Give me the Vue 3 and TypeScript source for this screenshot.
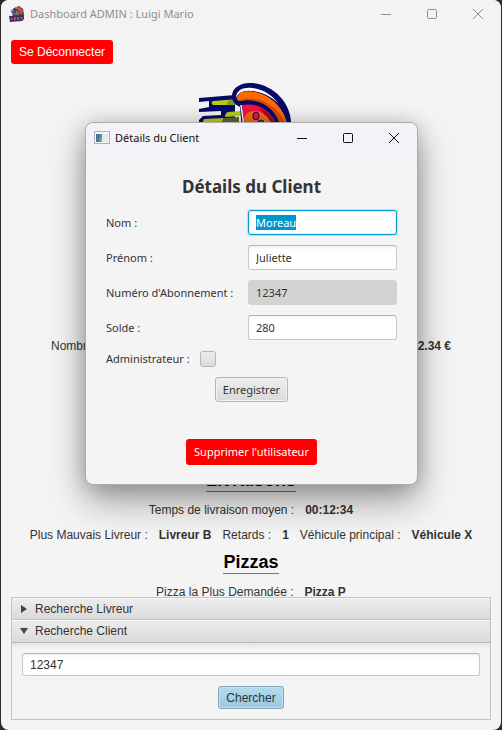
<script setup lang="ts">
import { onMounted, ref } from 'vue'

interface Field {
  id: string
  label: string
  value: string
  locked?: boolean
}

const fields = ref<Field[]>([
  { id: 'nom', label: 'Nom :', value: 'Moreau' },
  { id: 'prenom', label: 'Prénom :', value: 'Juliette' },
  { id: 'abonnement', label: "Numéro d'Abonnement :", value: '12347', locked: true },
  { id: 'solde', label: 'Solde :', value: '280' },
])
const admin = ref(false)
const query = ref('12347')
const form = ref<HTMLFormElement | null>(null)

onMounted(() => {
  const first = form.value?.querySelector<HTMLInputElement>('input')
  first?.focus()
  first?.select()
})
</script>

<template>
  <div class="desktop">
    <div class="window">
      <header class="titlebar">
        <svg class="app-icon" viewBox="0 0 16 16" aria-hidden="true">
          <path d="M2 5l3-3 5-2 4 3 1 5-2 3-9-1z" fill="#3a3c66" />
          <path d="M7 1q6-1 7 6l-2 1Q11 3 6 3z" fill="#e0542c" />
          <path d="M7 4l4 4-5 2z" fill="#4f8f78" />
          <path d="M9 4l3 4-3 1z" fill="#d33a45" />
          <path d="M2 4h3v2H2zM3 7h3v1H3z" fill="#7f8f4a" />
          <path d="M0 10l15-1v4l-2 2-12 1z" fill="#32346c" />
          <path d="M2 12h2v2H2zM5 11h2v3H5zM8 11h2v3H8zM11 11h3v1l-2 2z" fill="#d9413e" />
        </svg>
        <span class="caption">Dashboard ADMIN : Luigi Mario</span>
        <div class="controls">
          <button type="button" aria-label="Réduire"><svg viewBox="0 0 10 10"><path d="M0 5.5h10" /></svg></button>
          <button type="button" aria-label="Agrandir"><svg viewBox="0 0 10 10"><rect x=".5" y=".5" width="9" height="9" rx="1" /></svg></button>
          <button type="button" aria-label="Fermer"><svg viewBox="0 0 10 10"><path d="M0 0l10 10M10 0L0 10" /></svg></button>
        </div>
      </header>

      <div class="toolbar">
        <button type="button" class="danger">Se Déconnecter</button>
      </div>

      <main class="stats">
        <svg class="logo" viewBox="0 0 104 100" aria-hidden="true">
          <path d="M0 15l36-3v30H0v-5l4-4 18-1v-4L0 29v-3l10-2v-6L0 19z" fill="#050a6b" />
          <path d="M14 18l26-2-2 6H14q-3-2 0-4z" fill="#b9cc12" />
          <path d="M30 17l10-1v6H27z" fill="#8b9a10" />
          <path d="M29 29l13-1v5l-16 1q0-4 3-5z" fill="#b9cc12" />
          <path d="M5 36l20-1-3 6H3z" fill="#b9cc12" />
          <path d="M25 35l15-1v7H22z" fill="#5d6a24" />
          <path d="M33 15C32 5 41 0 51 0c23 0 43 21 41 44L46 84 41 24q-7-3-8-9z" fill="#050a6b" />
          <path d="M37 15C37 6 46 4 53 5c11 1 20 7 26 15-9-8-18-12-27-12-8-1-13 2-15 7z" fill="#fff" />
          <path d="M38 15c1-8 12-8 22-5 16 5 28 20 28 34h-6C77 24 60 13 41 18q-3 0-3-3z" fill="#ff6a00" />
          <path d="M40 17c20-6 38 6 47 23v4h-5C77 25 60 14 41 18z" fill="#d94a08" />
          <path d="M43 22c17-3 31 7 35 22L50 78z" fill="#f5123c" />
          <path d="M59 24q15 6 19 20h-8q-2-13-11-20z" fill="#a8062c" />
          <path d="M45 35q3-8 13-7 12 3 15 16L50 76z" fill="#f36a16" />
          <path d="M42 22l3 22" stroke="#fff" stroke-width="1.500" />
          <ellipse cx="57" cy="33" rx="3" ry="4" fill="#f5123c" stroke="#050a6b" />
          <ellipse cx="62" cy="40" rx="3" ry="3" fill="#f5123c" stroke="#050a6b" />
        </svg>

        <p class="row spread"><span>Nombre</span><b>12.34 €</b></p>

        <h2>Livraisons</h2>
        <p class="row"><span>Temps de livraison moyen :</span><b>00:12:34</b></p>
        <p class="row">
          <span>Plus Mauvais Livreur :</span><b>Livreur B</b>
          <span>Retards :</span><b>1</b>
          <span>Véhicule principal :</span><b>Véhicule X</b>
        </p>

        <h2>Pizzas</h2>
        <p class="row"><span>Pizza la Plus Demandée :</span><b>Pizza P</b></p>
      </main>

      <section class="accordion">
        <button type="button" class="fold" aria-expanded="false">
          <svg viewBox="0 0 8 8"><path d="M1 0l6 4-6 4z" /></svg>Recherche Livreur
        </button>
        <button type="button" class="fold open" aria-expanded="true">
          <svg viewBox="0 0 8 8"><path d="M0 1h8L4 7z" /></svg>Recherche Client
        </button>
        <form class="search" @submit.prevent>
          <input v-model="query" type="text" class="text-field" aria-label="Recherche Client">
          <button type="submit" class="push primary">Chercher</button>
        </form>
      </section>
    </div>

    <div class="dialog" role="dialog" aria-labelledby="dialog-title">
      <header class="titlebar">
        <svg class="app-icon" viewBox="0 0 16 16" aria-hidden="true">
          <rect x=".5" y="1.500" width="15" height="12" fill="#f5f7fa" stroke="#a9b2bd" />
          <rect x="2" y="4" width="6" height="8" fill="#4d8f9a" />
          <path d="M2 4h3v8H2z" fill="#44749c" />
          <path d="M5 8h3v4H5z" fill="#5ca876" />
          <path d="M9 4h2v8H9zM12 4h2v8h-2z" fill="#dfe3e8" />
        </svg>
        <span class="caption">Détails du Client</span>
        <div class="controls">
          <button type="button" aria-label="Réduire"><svg viewBox="0 0 10 10"><path d="M0 5.500h10" /></svg></button>
          <button type="button" aria-label="Agrandir"><svg viewBox="0 0 10 10"><rect x=".5" y=".5" width="9" height="9" rx="1" /></svg></button>
          <button type="button" aria-label="Fermer"><svg viewBox="0 0 10 10"><path d="M0 0l10 10M10 0L0 10" /></svg></button>
        </div>
      </header>

      <form ref="form" class="details" @submit.prevent>
        <h1 id="dialog-title">Détails du Client</h1>
        <div v-for="field in fields" :key="field.id" class="field">
          <label :for="field.id">{{ field.label }}</label>
          <input :id="field.id" v-model="field.value" type="text" class="text-field" :disabled="field.locked">
        </div>
        <div class="check">
          <label for="admin">Administrateur :</label>
          <input id="admin" v-model="admin" type="checkbox">
        </div>
        <button type="submit" class="push">Enregistrer</button>
        <button type="button" class="danger remove">Supprimer l'utilisateur</button>
      </form>
    </div>
  </div>
</template>

<style>
body {
  background: #2b2b2b;
}
</style>

<style scoped>
* {
  box-sizing: border-box;
}

.desktop {
  position: relative;
  min-height: 100vh;
  display: flex;
  padding: 0 1px;
  background: #2b2b2b;
  font: 12px/16px "Liberation Sans", Arial, sans-serif;
  color: #333;
}

button,
input {
  font: inherit;
  color: inherit;
  margin: 0;
}

.window {
  flex: 1;
  min-width: 0;
  height: 100vh;
  display: flex;
  flex-direction: column;
  background: #f4f4f4;
  border-radius: 8px;
  overflow: hidden;
}

.titlebar {
  flex: none;
  display: flex;
  align-items: center;
  height: 28px;
  padding-left: 8px;
  gap: 5px;
  background: #f3f3f3;
  color: #8f8f8f;
  font-family: "Noto Sans", "Open Sans", sans-serif;
  font-size: 11px;
}

.app-icon {
  width: 16px;
  height: 16px;
}

.controls {
  display: flex;
  margin-left: auto;
}

.controls button {
  display: flex;
  align-items: center;
  justify-content: center;
  width: 46px;
  height: 28px;
  padding: 0;
  border: 0;
  background: none;
}

.controls svg {
  width: 10px;
  height: 10px;
  fill: none;
  stroke: currentColor;
}

.toolbar {
  flex: none;
  padding: 12px 10px 0;
}

.danger {
  height: 24px;
  padding: 0 8px;
  border: 0;
  border-radius: 3px;
  background: #f00;
  color: #fff;
}

.stats {
  flex: 1;
  min-height: 0;
  overflow: hidden;
  display: flex;
  flex-direction: column;
  align-items: center;
  padding-top: 19px;
}

.logo {
  flex: none;
  width: 104px;
  height: 100px;
}

.row {
  flex: none;
  display: flex;
  justify-content: center;
  gap: 11px;
  margin: 0 0 9px;
  white-space: nowrap;
}

.spread {
  align-self: stretch;
  justify-content: space-between;
  margin: 155px 50px 116px;
}

h2 {
  flex: none;
  margin: 0 0 10px;
  border-bottom: 1px solid #777;
  color: #000;
  font-size: 18px;
  line-height: 21px;
}

.accordion {
  flex: none;
  margin: 0 10px 10px;
  border: 1px solid #c3c3c3;
  border-top: 0;
}

.fold {
  display: flex;
  align-items: center;
  gap: 7px;
  width: 100%;
  height: 22px;
  padding: 0 8px;
  border: 0;
  border-top: 1px solid #c3c3c3;
  background: linear-gradient(#ededed, #dadada);
  box-shadow: inset 0 1px #fafafa;
}

.fold.open {
  height: 24px;
  border-bottom: 1px solid #b5b5b5;
}

.fold svg {
  width: 8px;
  height: 8px;
  fill: #444;
}

.search {
  display: flex;
  flex-direction: column;
  align-items: center;
  gap: 10px;
  padding: 10px;
  background: linear-gradient(#e4e4e4, #f4f4f4 6px);
}

.text-field {
  width: 100%;
  height: 23px;
  padding: 0 7px;
  border: 1px solid #c8c8c8;
  border-top-color: #b4b4b4;
  border-radius: 3px;
  background: linear-gradient(#f2f2f2, #fff 4px);
  outline: 0;
}

.text-field:focus {
  border-color: #039ed3;
  background: #fff;
  box-shadow: 0 0 0 1px #b6e2f2, inset 0 0 0 1px #d9f1f9;
}

.text-field::selection {
  background: #0096c9;
  color: #fff;
}

.text-field:disabled {
  border-color: #d3d3d3;
  background: #d3d3d3;
}

.push {
  height: 23px;
  padding: 0 7px;
  border: 1px solid #b5b5b5;
  border-radius: 3px;
  background: linear-gradient(#ededed, #dadada);
  box-shadow: inset 0 0 0 1px #f2f2f2;
}

.primary {
  border-color: #7ea5b8;
  background: linear-gradient(#b2dcee, #9dc8dc);
  box-shadow: inset 0 0 0 1px #bfe2f0;
}

.dialog {
  position: absolute;
  top: 122px;
  left: 85px;
  right: 84px;
  border: 1px solid #ababab;
  border-radius: 8px;
  background: #f4f4f4;
  box-shadow: 0 16px 36px rgba(0, 0, 0, 0.36), 0 2px 20px rgba(0, 0, 0, 0.18);
  font-family: "Noto Sans", "Open Sans", sans-serif;
  font-size: 11px;
}

.dialog .titlebar {
  height: 30px;
  border-radius: 8px 8px 0 0;
  background: #f2f2f8;
  color: #111;
}

.details {
  display: flex;
  flex-direction: column;
  align-items: center;
  padding: 21px 20px 19px;
}

h1 {
  margin: 0 0 10px;
  font-size: 17px;
  line-height: 26px;
}

.field {
  display: grid;
  grid-template-columns: 132px 1fr;
  align-items: center;
  align-self: stretch;
  gap: 10px;
  margin-bottom: 10px;
  white-space: nowrap;
}

.field .text-field {
  height: 25px;
}

.check {
  display: flex;
  align-items: center;
  align-self: flex-start;
  gap: 10px;
  height: 17px;
  margin-bottom: 10px;
}

.check input {
  appearance: none;
  width: 16px;
  height: 16px;
  border: 1px solid #b5b5b5;
  border-radius: 3px;
  background: linear-gradient(#ededed, #dadada);
}

.details .push {
  height: 25px;
}

.details .remove {
  height: 26px;
  margin-top: 37px;
}
</style>
